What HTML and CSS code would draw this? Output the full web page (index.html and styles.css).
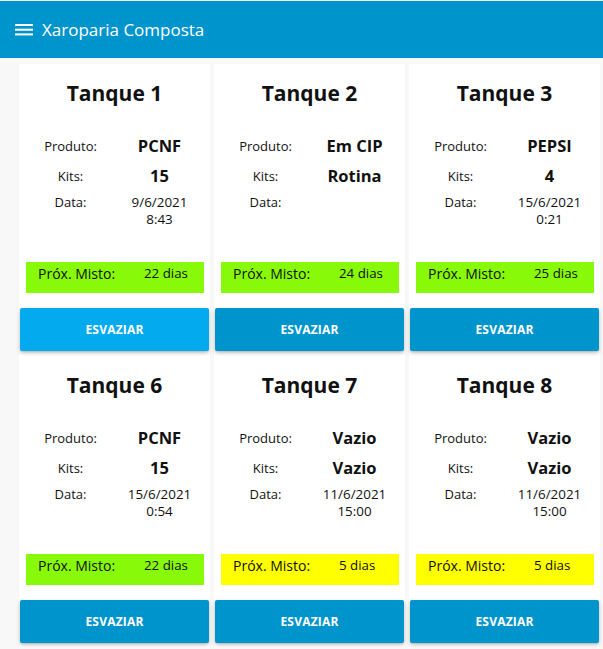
FILE: index.html
```html
<!DOCTYPE html>
<html lang="pt">
<head>
<meta charset="utf-8">
<title>Xaroparia Composta</title>
<link rel="stylesheet" href="styles.css">
</head>
<body>
<header class="appbar">
  <svg class="menu-icon" width="18" height="12" viewBox="0 0 18 12" aria-hidden="true">
    <rect x="0" y="0" width="18" height="2" fill="#fff"/>
    <rect x="0" y="4.7" width="18" height="2" fill="#fff"/>
    <rect x="0" y="9.4" width="18" height="2" fill="#fff"/>
  </svg>
  <span class="appbar-title">Xaroparia Composta</span>
</header>
<main class="tanks">
  <section class="tank">
    <h2 class="tank-title">Tanque 1</h2>
    <div class="info">
      <span class="label">Produto:</span><span class="value">PCNF</span>
      <span class="label">Kits:</span><span class="value">15</span>
      <span class="label date-label">Data:</span><span class="date">9/6/2021<br>8:43</span>
    </div>
    <div class="misto green"><span class="misto-label">Próx. Misto:</span><span class="misto-value">22 dias</span></div>
    <button class="btn btn-active">ESVAZIAR</button>
  </section>
  <section class="tank">
    <h2 class="tank-title">Tanque 2</h2>
    <div class="info">
      <span class="label">Produto:</span><span class="value">Em CIP</span>
      <span class="label">Kits:</span><span class="value">Rotina</span>
      <span class="label date-label">Data:</span><span class="date"></span>
    </div>
    <div class="misto green"><span class="misto-label">Próx. Misto:</span><span class="misto-value">24 dias</span></div>
    <button class="btn">ESVAZIAR</button>
  </section>
  <section class="tank">
    <h2 class="tank-title">Tanque 3</h2>
    <div class="info">
      <span class="label">Produto:</span><span class="value">PEPSI</span>
      <span class="label">Kits:</span><span class="value">4</span>
      <span class="label date-label">Data:</span><span class="date">15/6/2021<br>0:21</span>
    </div>
    <div class="misto green"><span class="misto-label">Próx. Misto:</span><span class="misto-value">25 dias</span></div>
    <button class="btn">ESVAZIAR</button>
  </section>
  <section class="tank">
    <h2 class="tank-title">Tanque 6</h2>
    <div class="info">
      <span class="label">Produto:</span><span class="value">PCNF</span>
      <span class="label">Kits:</span><span class="value">15</span>
      <span class="label date-label">Data:</span><span class="date">15/6/2021<br>0:54</span>
    </div>
    <div class="misto green"><span class="misto-label">Próx. Misto:</span><span class="misto-value">22 dias</span></div>
    <button class="btn">ESVAZIAR</button>
  </section>
  <section class="tank">
    <h2 class="tank-title">Tanque 7</h2>
    <div class="info">
      <span class="label">Produto:</span><span class="value">Vazio</span>
      <span class="label">Kits:</span><span class="value">Vazio</span>
      <span class="label date-label">Data:</span><span class="date">11/6/2021<br>15:00</span>
    </div>
    <div class="misto yellow"><span class="misto-label">Próx. Misto:</span><span class="misto-value">5 dias</span></div>
    <button class="btn">ESVAZIAR</button>
  </section>
  <section class="tank">
    <h2 class="tank-title">Tanque 8</h2>
    <div class="info">
      <span class="label">Produto:</span><span class="value">Vazio</span>
      <span class="label">Kits:</span><span class="value">Vazio</span>
      <span class="label date-label">Data:</span><span class="date">11/6/2021<br>15:00</span>
    </div>
    <div class="misto yellow"><span class="misto-label">Próx. Misto:</span><span class="misto-value">5 dias</span></div>
    <button class="btn">ESVAZIAR</button>
  </section>
</main>
</body>
</html>
```

FILE: styles.css
```css
* { box-sizing: border-box; }

html, body {
  margin: 0;
  padding: 0;
  background: #f8f8f8;
  font-family: "Open Sans", "Noto Sans", "Liberation Sans", sans-serif;
  color: #111;
}

body {
  border-top: 1px solid #eef3f6;
}

.appbar {
  height: 57px;
  background: #0094cc;
  display: flex;
  align-items: center;
  padding-left: 15px;
  color: #fff;
}

.menu-icon {
  display: block;
  margin-right: 9px;
}

.appbar-title {
  font-size: 17px;
  line-height: 20px;
}

.tanks {
  display: grid;
  grid-template-columns: repeat(3, 191px);
  column-gap: 4px;
  padding: 6px 0 0 19px;
}

.tank {
  background: #fff;
  height: 292px;
  padding: 15px 0 5px;
  display: flex;
  flex-direction: column;
}

.tank-title {
  margin: 0;
  font-size: 21px;
  line-height: 28px;
  font-weight: 700;
  text-align: center;
}

.info {
  height: 128px;
  margin-top: 27px;
  padding: 0 6px 0 7px;
  display: grid;
  grid-template-columns: 89px 89px;
  grid-template-rows: 24px 24px auto;
  row-gap: 5.5px;
  align-content: start;
  text-align: center;
}

.label {
  font-size: 13px;
  line-height: 24px;
}

.value {
  font-size: 16.5px;
  line-height: 24px;
  font-weight: 700;
}

.date-label,
.date {
  font-size: 13px;
  line-height: 17px;
  margin-top: 0.5px;
}

.date {
  font-size: 13.4px;
}

.misto {
  height: 31px;
  margin: 0 6px 0 7px;
  padding: 2px 0 0 12px;
  display: grid;
  grid-template-columns: 106px 1fr;
  align-items: start;
}

.misto.green { background: #88f909; }
.misto.yellow { background: #ffff00; }

.misto-label {
  font-size: 14px;
  line-height: 20px;
}

.misto-value {
  font-size: 13.3px;
  line-height: 18px;
}

.btn {
  margin: 15px 1px 0;
  height: 43px;
  border: 0;
  border-radius: 2px;
  background: #0094cc;
  color: #fff;
  font-family: inherit;
  font-size: 12px;
  font-weight: 700;
  letter-spacing: 0.2px;
  box-shadow: 0 2px 4px rgba(0, 0, 0, 0.22), 0 1px 2px rgba(0, 0, 0, 0.12);
}

.btn-active {
  background: #03aaee;
}
```
